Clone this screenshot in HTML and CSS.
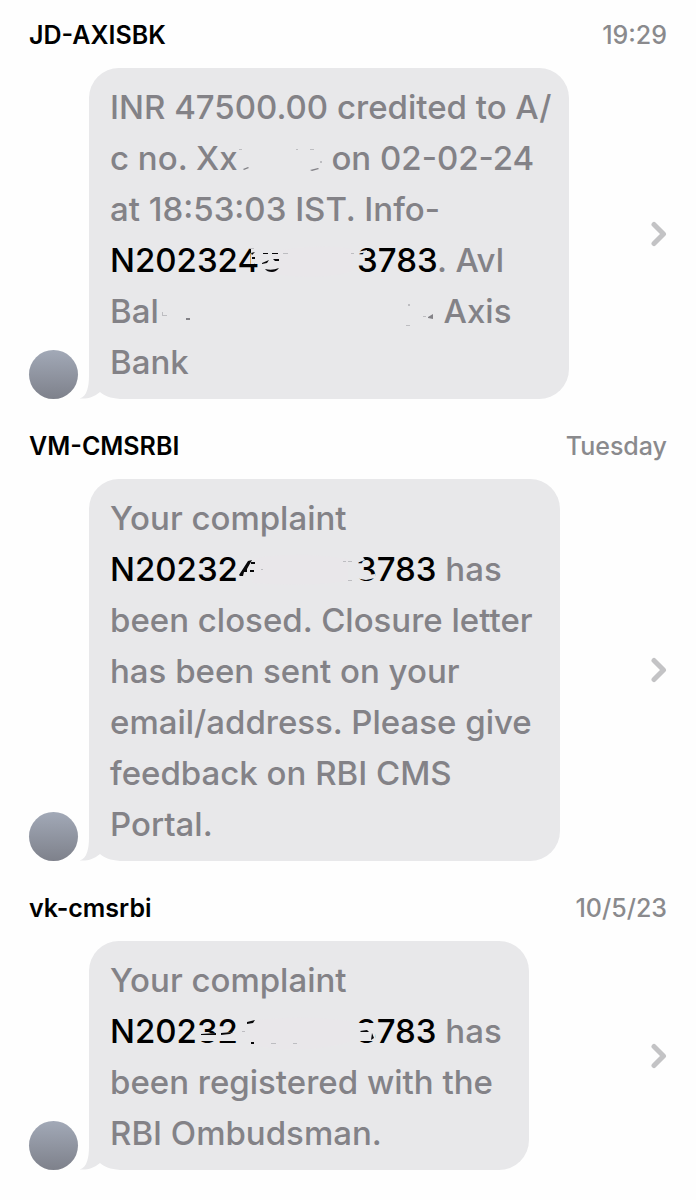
FILE: index.html
```html
<!DOCTYPE html>
<html lang="en">
  <head>
    <meta charset="UTF-8" />
    <meta name="viewport" content="width=device-width, initial-scale=1.0" />
    <title>Messages</title>
    <link rel="stylesheet" href="styles.css" />
  </head>
  <body>
    <!-- shared shapes -->
    <svg class="sprite" aria-hidden="true">
      <symbol id="chevron" viewBox="0 0 16 26">
        <path d="M3 3.5L12.5 13L3 22.5" />
      </symbol>
      <symbol id="tail" viewBox="0 0 40 32">
        <path class="tail_fill" d="M9 0V8C9 20 7 29 0 31.5V32H20V0Z" />
        <path class="tail_cut" d="M0 32V31.5C8 32 14 30 20 25C25 29 30 31 40 32Z" />
      </symbol>
    </svg>

    <ul class="messages">
      <li>
        <a class="message" href="#axis">
          <div class="message_head">
            <span class="sender">JD-AXISBK</span>
            <time>19:29</time>
          </div>
          <div class="message_row">
            <span class="avatar"></span>
            <div class="bubble">
              INR 47500.00 credited to A/<br />c no. Xx<span class="hidden_text account"><svg class="marks">
                  <path class="grey" d="M5 36L10 34L11 35L6 37ZM72 37L80 35L81 36L74 38Z" />
                  <path class="faint" d="M1 16h3v1h-3ZM58 16h2v1h-2ZM72 16h4v1h-4ZM82 28h2v2h-2Z" />
                </svg></span>
              on 02-02-24<br />at 18:53:03 IST. Info-<br /><b>N202324<span class="hidden_text reference"><svg class="marks">
                  <path class="smudge" d="M14 17Q55 8 94 14V36Q58 47 10 38Z" />
                  <path class="cover" d="M-8 12H1V26H-2L-5 29H-8Z" />
                  <path class="ink" d="M-8 18L-4 17L-7 20ZM-7 22h3v2h-3ZM4 18h5v1h-5ZM13 18h6v1h-6ZM3 28L10 25L8 28L3 29ZM14 24h6v2h-4ZM6 34Q13 36 20 33Q17 37 13 37Q8 37 6 34Z" />
                  <path class="faint" d="M-10 13h5v1h-5ZM24 18h5v1h-5ZM92 18h3v1h-3Z" />
                  <path class="cover" d="M98 17L108 15L108 17L98 19Z" />
                </svg></span>3783</b>. Avl<br />Bal<span class="hidden_text balance"><svg class="marks">
                  <path class="faint" d="M3 26h1v3h4v1h-5ZM249 18h2v2h-2ZM247 39h4v1h-4ZM264 30h3v1h-3Z" />
                  <path class="grey" d="M27 32h4v2h-4ZM269 31L274 28V33L269 32Z" />
                </svg></span>
              Axis<br />Bank
              <svg class="tail"><use href="#tail" /></svg>
            </div>
            <svg class="chevron"><use href="#chevron" /></svg>
          </div>
        </a>
      </li>

      <li>
        <a class="message" href="#complaint-closed">
          <div class="message_head">
            <span class="sender">VM-CMSRBI</span>
            <time>Tuesday</time>
          </div>
          <div class="message_row">
            <span class="avatar"></span>
            <div class="bubble bubble_wide">
              Your complaint<br /><b>N20232<span class="hidden_text closed"><svg class="marks">
                  <path class="smudge" d="M18 14Q60 7 110 15V37Q70 43 14 39Z" />
                  <path class="ink" d="M1 31L10 17L14 16L9 25L9 28L6 28L5 32H2ZM13 18h4v2h-4ZM12 26h4v2h-4Z" />
                  <path class="faint" d="M23 25h2v1h-2ZM105 17h3v1h-3ZM110 17h4v1h-4ZM110 36h4v1h-4Z" />
                  <path class="cover" d="M117 12L124 12L127 16L119 19ZM117 28L126 28L129 31L137 30L137 34L128 36L117 34Z" />
                </svg></span>3783</b>
              has<br />been closed. Closure letter<br />has been sent on your<br />email/address. Please give<br />feedback on RBI CMS<br />Portal.
              <svg class="tail"><use href="#tail" /></svg>
            </div>
            <svg class="chevron"><use href="#chevron" /></svg>
          </div>
        </a>
      </li>

      <li>
        <a class="message" href="#complaint-registered">
          <div class="message_head">
            <span class="sender">vk-cmsrbi</span>
            <time>10/5/23</time>
          </div>
          <div class="message_row">
            <span class="avatar"></span>
            <div class="bubble bubble_wide">
              Your complaint<br /><b>N20232<span class="hidden_text closed"><svg class="marks">
                  <path class="cover" d="M-40 28L-1 26V35L-40 35Z" />
                  <path class="ink" d="M-37 28L-22 27L-22 29L-37 29ZM-17 27L-5 26L-8 28L-17 29Z" />
                  <path class="smudge" d="M12 15Q60 8 112 15V36Q65 49 12 39Z" />
                  <path class="ink" d="M9 16L17 14L15 17L9 18ZM13 36h3v2h-3Z" />
                  <path class="faint" d="M4 25h3v1h-3ZM33 37h5v1h-5ZM55 37h4v1h-4Z" />
                  <path class="cover" d="M117 17H137V35H117Z" />
                  <path class="ink" d="M122 25L129 24L131 26L123 26ZM134 27L136 32L133 34Z" />
                </svg></span>3783</b>
              has<br />been registered with the<br />RBI Ombudsman.
              <svg class="tail"><use href="#tail" /></svg>
            </div>
            <svg class="chevron"><use href="#chevron" /></svg>
          </div>
        </a>
      </li>
    </ul>
  </body>
</html>
```
FILE: styles.css
```css
* {
  box-sizing: border-box;
}
body {
  margin: 0;
  background-color: #fefefe;
  font-family: Inter, "Liberation Sans", sans-serif;
  font-weight: 500;
}
.sprite {
  display: none;
}
.messages {
  display: flex;
  flex-direction: column;
  gap: 32px;
  margin: 0;
  padding: 20px 29px;
  list-style: none;
}
.message {
  display: block;
  color: #838287;
  text-decoration: none;
}
.message_head {
  display: flex;
  justify-content: space-between;
  margin-bottom: 18px;
  font-size: 25px;
  line-height: 30px;
}
.sender {
  color: #000;
  font-weight: 600;
}
time {
  color: #8a8a8d;
}
.message_row {
  display: flex;
  align-items: flex-end;
}
.avatar {
  flex: none;
  width: 49px;
  height: 49px;
  margin-right: 11px;
  border-radius: 50%;
  background: linear-gradient(#a2a9b7, #7e818b);
}
.bubble {
  position: relative;
  padding: 14px 17px 11px 21px;
  border-radius: 30px 30px 30px 0;
  background-color: #e8e8ea;
  font-size: 33px;
  line-height: 51px;
  white-space: nowrap;
}
.bubble_wide {
  padding-right: 27px;
}
.bubble b {
  color: #000;
  font-weight: 500;
}

/* the tail hangs out of the bottom left corner of the bubble */
.tail {
  position: absolute;
  left: -9px;
  bottom: 0;
  width: 40px;
  height: 32px;
}
.tail_fill {
  fill: #e8e8ea;
}
.tail_cut {
  fill: #fefefe;
}
.chevron {
  flex: none;
  align-self: center;
  width: 16px;
  height: 26px;
  margin-left: auto;
  fill: none;
  stroke: #c3c3c5;
  stroke-width: 5;
  stroke-linecap: round;
  stroke-linejoin: round;
}

/* rubbed out numbers */
.hidden_text {
  display: inline-block;
  height: 51px;
  vertical-align: top;
}
.account {
  width: 85px;
}
.reference {
  width: 98px;
}
.balance {
  width: 276px;
}
.closed {
  width: 118px;
}
.marks {
  position: relative;
  display: block;
  width: 100%;
  height: 51px;
  overflow: visible;
}
.cover {
  fill: #e8e8ea;
}
.smudge {
  fill: #e9e7ea;
}
.ink {
  fill: #08080a;
}
.grey {
  fill: #838287;
}
.faint {
  fill: #bdbdc1;
}
```
